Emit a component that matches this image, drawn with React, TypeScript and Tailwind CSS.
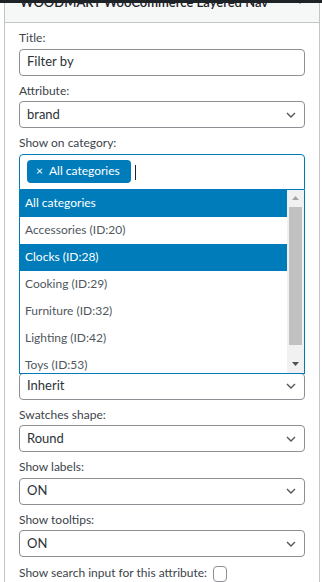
import type { ReactNode } from "react";

const font = "font-['Lato','Noto_Sans',sans-serif]";

function Chevron() {
  return (
    <svg className="pointer-events-none absolute right-[8px] top-1/2 -translate-y-1/2" width="10" height="6" viewBox="0 0 10 6" fill="none">
      <path d="M1 1l4 4 4-4" stroke="#50575e" strokeWidth="1.4" />
    </svg>
  );
}

function Field({ label, children }: { label: string; children: ReactNode }) {
  return (
    <div className="mt-[6px]">
      <div className="mb-[2px] text-[12px] leading-[17.5px] text-[#3c434a]">{label}</div>
      {children}
    </div>
  );
}

function Select({ value }: { value: string }) {
  return (
    <div className="relative flex h-[27px] items-center rounded-[4px] border border-[#8c8f94] bg-white pl-[7px] text-[13px] text-[#2c3338]">
      {value}
      <Chevron />
    </div>
  );
}

const options = [
  { label: "All categories", active: true },
  { label: "Accessories (ID:20)" },
  { label: "Clocks (ID:28)", active: true },
  { label: "Cooking (ID:29)" },
  { label: "Furniture (ID:32)" },
  { label: "Lighting (ID:42)" },
  { label: "Toys (ID:53)" },
  { label: "Watches (ID:61)" }
];

export default function App() {
  return (
    <div className={`relative h-[582px] w-[322px] overflow-hidden bg-white ${font}`}>
      <div className="absolute inset-x-0 top-0 z-30 h-[3px] bg-[#1d2327]" />
      <div className="mx-[4px] -mt-[20px] w-[316px] border border-[#c3c4c7] bg-white">
        <div className="relative flex h-[42px] items-center border-b border-[#c3c4c7] bg-[#f6f7f7] pl-[15px] pt-[2px]">
          <span className="text-[13px] font-semibold text-[#1d2327]">WOODMART WooCommerce Layered Nav</span>
          <svg className="absolute right-[14px] top-[17px]" width="10" height="6" viewBox="0 0 10 6">
            <path d="M0 0h10L5 6z" fill="#50575e" />
          </svg>
        </div>
        <div className="px-[14px] pb-[20px]">
          <Field label="Title:">
            <div className="flex h-[27px] items-center rounded-[4px] border border-[#8c8f94] bg-white pl-[7px] text-[13px] text-[#2c3338]">Filter by</div>
          </Field>
          <Field label="Attribute:">
            <Select value="brand" />
          </Field>
          <Field label="Show on category:">
            <div className="relative">
              <div className="flex h-[36px] items-start rounded-t-[4px] border border-[#007cba] bg-white pl-[7px] pt-[5px]">
                <span className="flex h-[23px] items-center rounded-[4px] bg-[#007cba] pl-[9px] pr-[11px] text-[12px] text-white">
                  <span className="mr-[6px] text-[12px] leading-none">×</span>
                  All categories
                </span>
                <span className="ml-[4px] mt-[5px] h-[15px] w-[1px] bg-[#1d2327]" />
              </div>
              <div className="absolute left-0 top-[36px] z-20 w-full border border-t-0 border-[#007cba] bg-white">
                <div className="flex h-[183px] overflow-hidden">
                  <div className="min-w-0 flex-1">
                    {options.map((o) => (
                      <div
                        key={o.label}
                        className={`flex h-[27px] items-center whitespace-nowrap pl-[5px] text-[12px] ${o.active ? "bg-[#007cba] text-white" : "text-[#50575e]"}`}
                      >
                        {o.label}
                      </div>
                    ))}
                  </div>
                  <div className="flex w-[17px] shrink-0 flex-col items-center bg-[#f1f1f1]">
                    <div className="flex h-[17px] w-full items-center justify-center">
                      <svg width="7" height="4" viewBox="0 0 7 4"><path d="M0 4h7L3.5 0z" fill="#a3a3a3" /></svg>
                    </div>
                    <div className="h-[138px] w-[13px] bg-[#c1c1c1]" />
                    <div className="flex-1" />
                    <div className="flex h-[17px] w-full items-center justify-center">
                      <svg width="7" height="4" viewBox="0 0 7 4"><path d="M0 0h7L3.5 4z" fill="#505050" /></svg>
                    </div>
                  </div>
                </div>
              </div>
            </div>
          </Field>
          <Field label="Display type:">
            <Select value="List" />
          </Field>
          <Field label="Query type:">
            <Select value="AND" />
          </Field>
          <Field label="Swatches size:">
            <Select value="Normal" />
          </Field>
          <Field label="Swatches style:">
            <Select value="Inherit" />
          </Field>
          <Field label="Swatches shape:">
            <Select value="Round" />
          </Field>
          <Field label="Show labels:">
            <Select value="ON" />
          </Field>
          <Field label="Show tooltips:">
            <Select value="ON" />
          </Field>
          <div className="mt-[6px] flex h-[20px] items-center text-[12px] text-[#3c434a]">
            Show search input for this attribute:
            <span className="ml-[6px] mt-[2px] h-[16px] w-[14px] rounded-[4px] border border-[#8c8f94] bg-white" />
          </div>
        </div>
      </div>
    </div>
  );
}
